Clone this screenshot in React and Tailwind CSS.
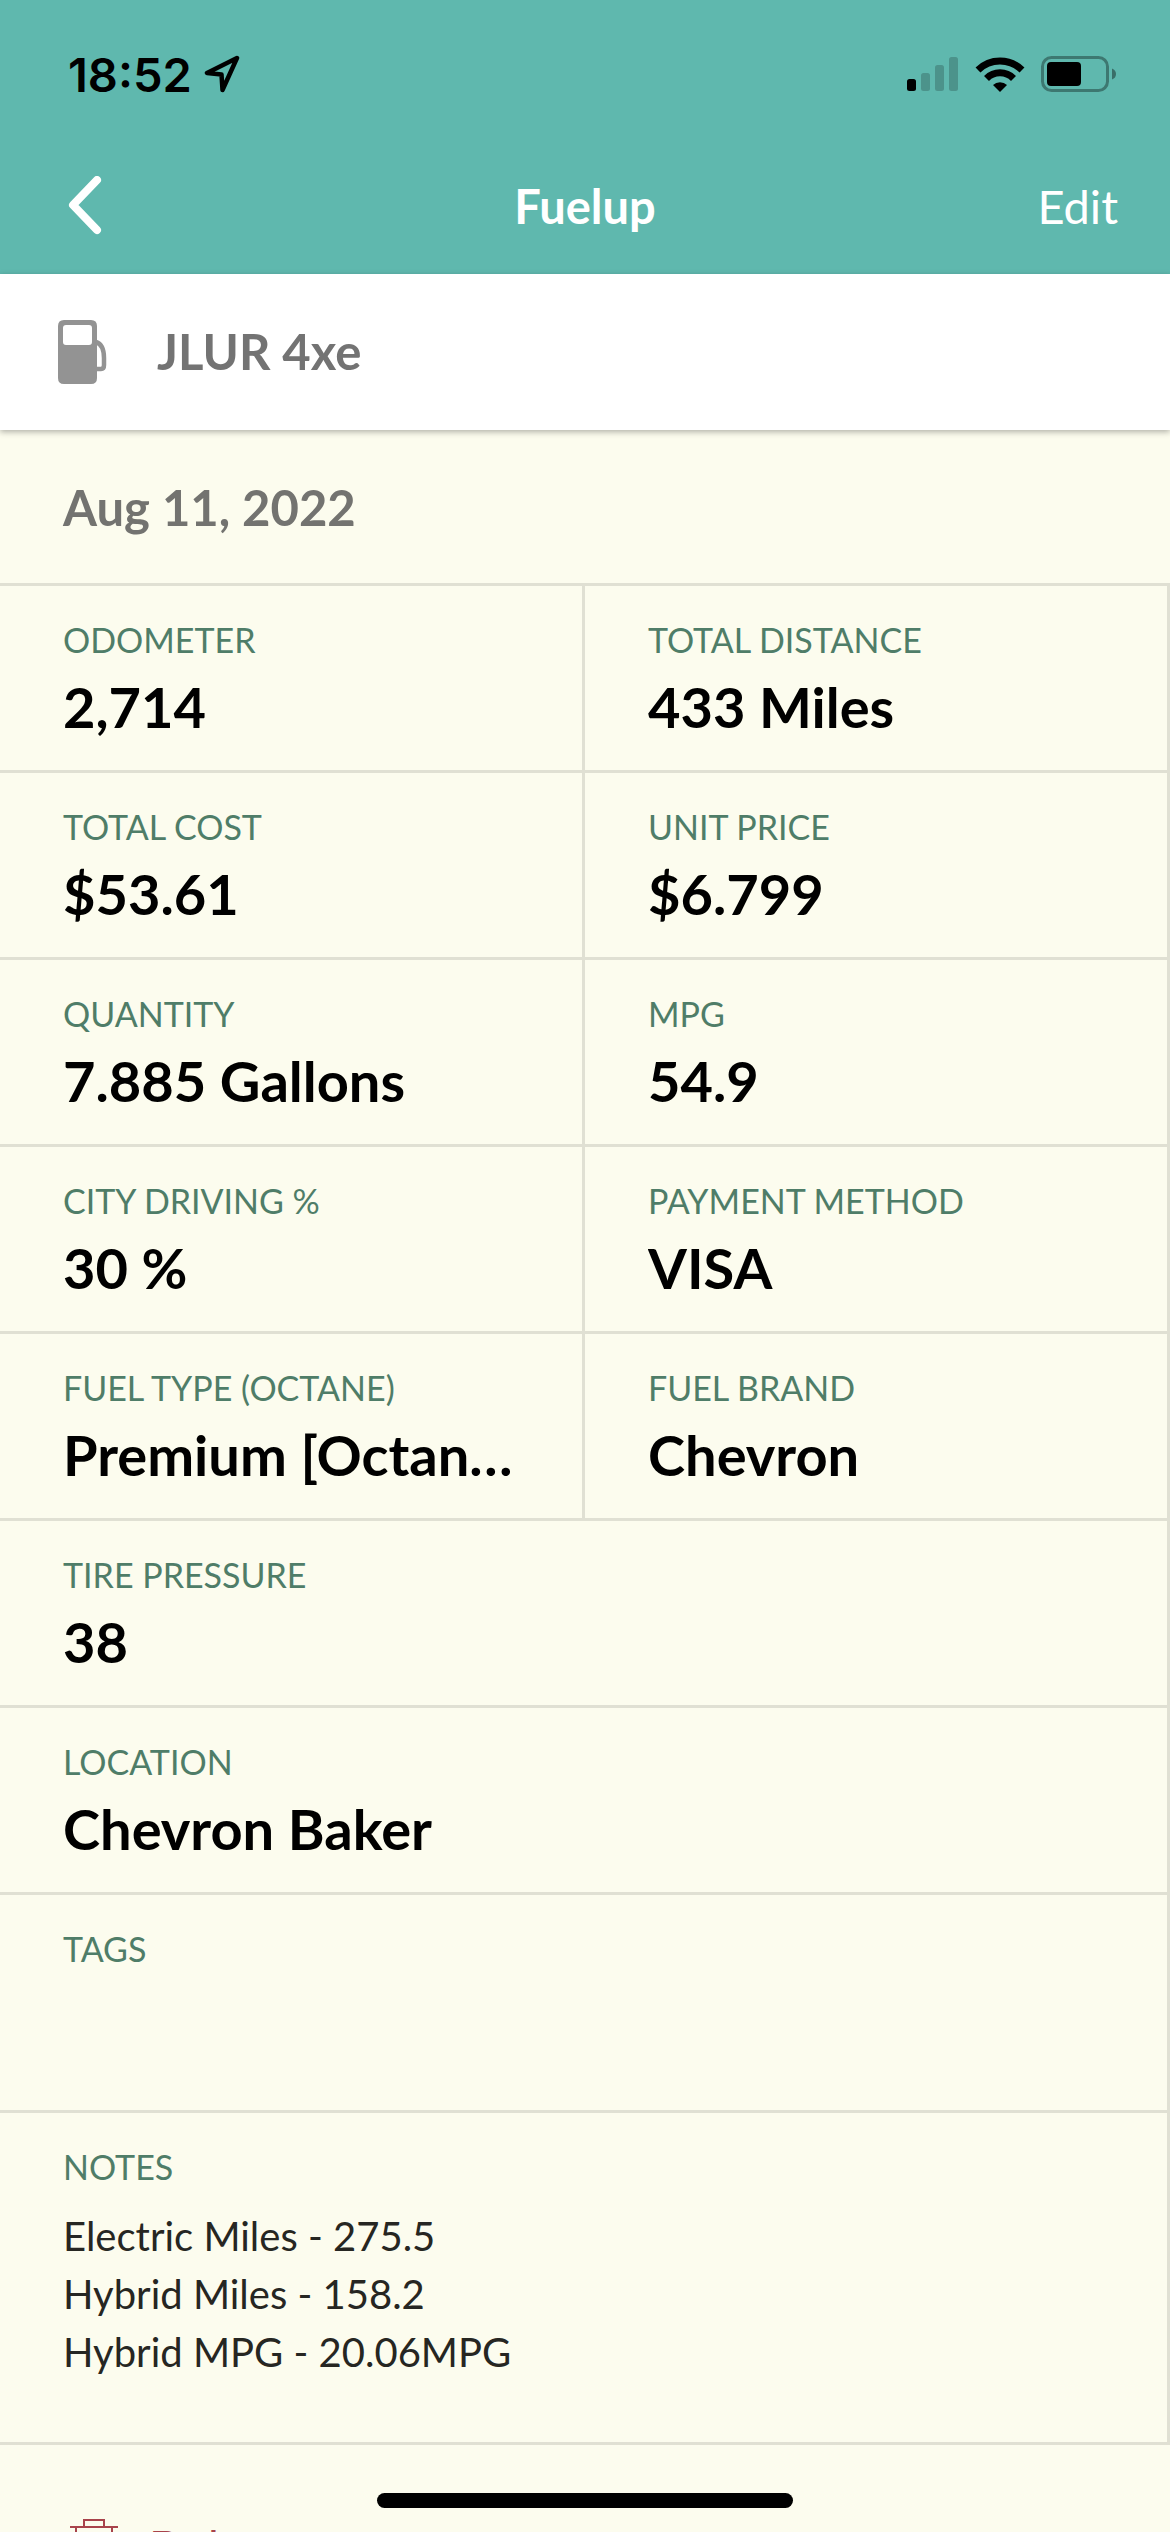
import React from "react";

const pairs = [
  { label: "Odometer", value: "2,714" },
  { label: "Total Distance", value: "433 Miles" },
  { label: "Total Cost", value: "$53.61" },
  { label: "Unit Price", value: "$6.799" },
  { label: "Quantity", value: "7.885 Gallons" },
  { label: "MPG", value: "54.9" },
  { label: "City Driving %", value: "30 %" },
  { label: "Payment Method", value: "VISA" },
  { label: "Fuel Type (Octane)", value: "Premium [Octane: 91]" },
  { label: "Fuel Brand", value: "Chevron" },
];

const notes = ["Electric Miles - 275.5", "Hybrid Miles - 158.2", "Hybrid MPG - 20.06MPG"];

function LocationIcon() {
  return (
    <svg className="h-10 w-9" viewBox="0 0 36 40" fill="none" stroke="black" strokeWidth="4.5" strokeLinejoin="round">
      <path d="M33 4 L3 19 L17.500 20.500 L18.500 36 Z" />
    </svg>
  );
}

function SignalIcon() {
  return (
    <svg className="h-[34px] w-[52px]" viewBox="0 0 52 34">
      <rect x="0" y="22" width="9" height="12" rx="2.500" />
      <g fillOpacity="0.2">
        <rect x="14" y="16" width="9" height="18" rx="2.500" />
        <rect x="28" y="8" width="9" height="26" rx="2.500" />
        <rect x="42" y="0" width="9" height="34" rx="2.500" />
      </g>
    </svg>
  );
}

function WifiIcon() {
  return (
    <svg className="h-9 w-[50px]" viewBox="0 0 50 36">
      <path d="M25 36 L18 29 A10 10 0 0 1 32 29 Z" />
      <g fill="none" stroke="black" strokeWidth="7">
        <path d="M11.500 22.500 A19 19 0 0 1 38.500 22.500" />
        <path d="M3 14 A31.500 31.500 0 0 1 47 14" />
      </g>
    </svg>
  );
}

function BatteryIcon() {
  return (
    <svg className="h-9 w-[76px]" viewBox="0 0 76 36">
      <rect x="1.500" y="1.500" width="65" height="33" rx="9" fill="none" stroke="black" strokeOpacity="0.35" strokeWidth="3" />
      <rect x="6" y="6" width="34" height="24" rx="4" />
      <path d="M71 12.500 Q75 14 75 18 Q75 22 71 23.500 Z" fillOpacity="0.4" />
    </svg>
  );
}

function PumpIcon() {
  return (
    <svg className="h-16 w-[50px]" viewBox="0 0 50 64">
      <path
        fill="#939393"
        fillRule="evenodd"
        d="M6 0 H33 Q39 0 39 6 V58 Q39 64 33 64 H6 Q0 64 0 58 V6 Q0 0 6 0 Z M8 5 Q5 5 5 8 V22 Q5 25 8 25 H31 Q34 25 34 22 V8 Q34 5 31 5 Z"
      />
      <path d="M38 22 C44 24 46 31 46 38 V45 Q46 49 43 49 H38" fill="none" stroke="#939393" strokeWidth="4.500" />
    </svg>
  );
}

function TrashIcon() {
  return (
    <svg className="h-[60px] w-[50px]" viewBox="0 0 50 60" fill="none" stroke="#a8434b" strokeWidth="2">
      <path d="M15 8 V1 H35 V8 M1 8 H49 M7 8 V58 H43 V8 M18 18 V48 M32 18 V48" />
    </svg>
  );
}

function Field({ label, children, className = "" }) {
  return (
    <div className={`min-w-0 border-r-[3px] border-b-[3px] border-[#e0e0d3] px-[63px] pt-[34px] ${className}`}>
      <dt className="text-[34px] leading-10 text-[#4f7d68] uppercase">{label}</dt>
      {children}
    </div>
  );
}

function Value({ children }) {
  return <dd className="mt-3 truncate text-[56px] leading-[70px] font-bold text-black">{children}</dd>;
}

export default function App() {
  return (
    <div className="relative flex h-screen flex-col overflow-hidden bg-[#fcfcee] font-['Lato',sans-serif]">
      <header className="shrink-0 bg-[#5fb8ae]">
        <div className="flex h-[148px] items-center justify-between pr-[53px] pl-[68px]">
          <div className="flex items-center gap-3">
            <span className="font-['Inter',sans-serif] text-[47px] leading-none font-semibold">18:52</span>
            <LocationIcon />
          </div>
          <div className="flex items-center gap-4">
            <SignalIcon />
            <WifiIcon />
            <BatteryIcon />
          </div>
        </div>
        <div className="grid h-[126px] grid-cols-3 items-center px-[52px] pb-[10px] text-white">
          <button type="button" aria-label="Back" className="justify-self-start px-4">
            <svg className="h-[60px] w-[34px]" viewBox="0 0 34 60" fill="none" stroke="white" strokeWidth="8" strokeLinecap="round" strokeLinejoin="round">
              <path d="M29 4 L5 29 L29 54" />
            </svg>
          </button>
          <h1 className="text-center text-[47px] font-bold">Fuelup</h1>
          <button type="button" className="justify-self-end text-[47px]">Edit</button>
        </div>
      </header>

      <section className="relative z-10 flex h-[156px] shrink-0 items-center gap-[49px] bg-white px-[58px] shadow-[0_2px_6px_rgba(0,0,0,0.3)]">
        <PumpIcon />
        <h2 className="text-[49px] font-bold text-[#737373]">JLUR 4xe</h2>
      </section>

      <main className="min-h-0 flex-1 overflow-y-auto [scrollbar-width:none]">
        <h3 className="flex h-[156px] items-center border-b-[3px] border-[#e0e0d3] px-[63px] pt-[3px] text-[49px] font-bold text-[#737370]">
          Aug 11, 2022
        </h3>
        <dl>
          <div className="grid grid-cols-2">
            {pairs.map((item) => (
              <Field key={item.label} label={item.label} className="h-[187px]">
                <Value>{item.value}</Value>
              </Field>
            ))}
          </div>
          <Field label="Tire Pressure" className="h-[187px]">
            <Value>38</Value>
          </Field>
          <Field label="Location" className="h-[187px]">
            <Value>Chevron Baker</Value>
          </Field>
          <Field label="Tags" className="h-[218px]" />
          <Field label="Notes" className="pb-[61px]">
            <dd className="mt-5 text-[40px] leading-[58px] text-[#262622]">
              {notes.map((line) => (
                <p key={line}>{line}</p>
              ))}
            </dd>
          </Field>
        </dl>
        <button type="button" className="flex w-full items-start gap-[30px] px-[69px] pt-[74px] pb-24 text-[#a8434b]">
          <TrashIcon />
          <span className="text-[46px] leading-[56px]">Delete</span>
        </button>
      </main>

      <div className="absolute inset-x-0 bottom-6 z-20 mx-auto h-[15px] w-[416px] rounded-full bg-black" />
    </div>
  );
}
